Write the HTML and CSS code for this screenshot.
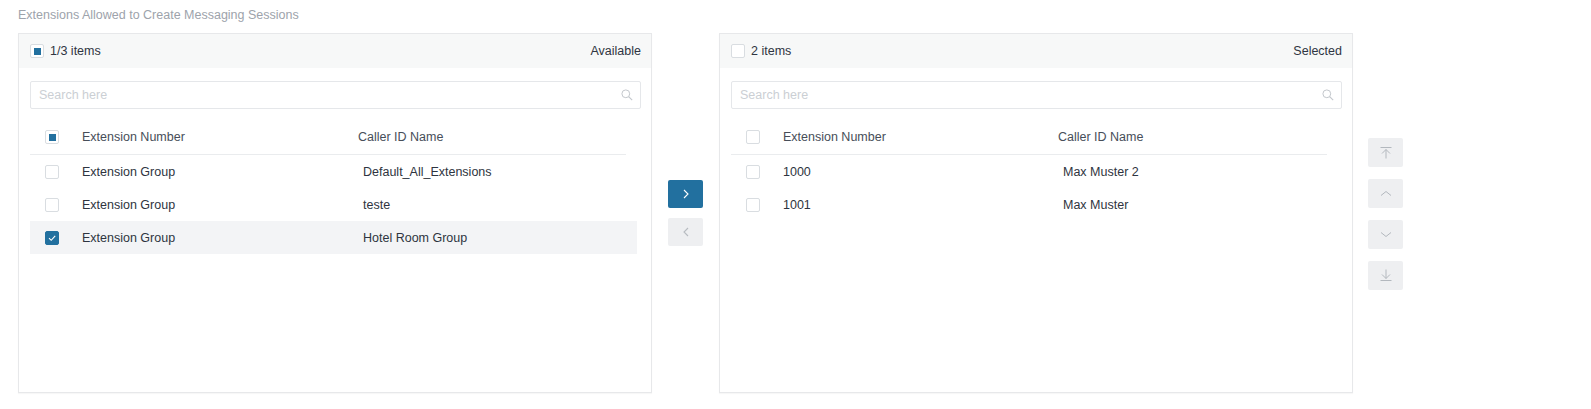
FILE: index.html
```html
<!DOCTYPE html>
<html lang="en">
<head>
  <meta charset="UTF-8">
  <title>Messaging Sessions</title>
  <meta name="viewport" content="width=device-width, initial-scale=1.0">
  <link rel="stylesheet" href="styles.css">
</head>
<body>
  <div class="page">
    <div class="field-label">Extensions Allowed to Create Messaging Sessions</div>

    <div class="transfer">
      <div class="transfer-list">
        <div class="list-header">
          <span class="cb cb-half"></span>
          <span class="count">1/3 items</span>
          <span class="list-title">Available</span>
        </div>
        <div class="list-body">
          <div class="search">
            <input type="text" placeholder="Search here">
            <svg width="12" height="12" viewBox="0 0 12 12"><circle cx="4.8" cy="4.8" r="3.9" fill="none" stroke="#c3c7cc" stroke-width="1"/><path d="M7.6 7.6 L11.2 11.2" stroke="#c3c7cc" stroke-width="1.1"/></svg>
          </div>
          <div class="table">
            <div class="row thead">
              <div class="cell-check"><span class="cb cb-half"></span></div>
              <div class="cell-num">Extension Number</div>
              <div class="cell-name">Caller ID Name</div>
            </div>
            <div class="row">
              <div class="cell-check"><span class="cb"></span></div>
              <div class="cell-num">Extension Group</div>
              <div class="cell-name">Default_All_Extensions</div>
            </div>
            <div class="row">
              <div class="cell-check"><span class="cb"></span></div>
              <div class="cell-num">Extension Group</div>
              <div class="cell-name">teste</div>
            </div>
            <div class="row selected">
              <div class="cell-check">
                <span class="cb cb-on"><svg width="10" height="10" viewBox="0 0 10 10"><path d="M2 5.2 L4.2 7.3 L8.2 2.8" fill="none" stroke="#fff" stroke-width="1.1"/></svg></span>
              </div>
              <div class="cell-num">Extension Group</div>
              <div class="cell-name">Hotel Room Group</div>
            </div>
          </div>
        </div>
      </div>

      <div class="operations">
        <button class="btn btn-primary">
          <svg width="8" height="10" viewBox="0 0 8 10"><path d="M2 1 L6 5 L2 9" fill="none" stroke="#fff" stroke-width="1.1"/></svg>
        </button>
        <button class="btn">
          <svg width="8" height="10" viewBox="0 0 8 10"><path d="M6 1 L2 5 L6 9" fill="none" stroke="#b7bbc1" stroke-width="1.1"/></svg>
        </button>
      </div>

      <div class="transfer-list list-right">
        <div class="list-header">
          <span class="cb"></span>
          <span class="count">2 items</span>
          <span class="list-title">Selected</span>
        </div>
        <div class="list-body">
          <div class="search">
            <input type="text" placeholder="Search here">
            <svg width="12" height="12" viewBox="0 0 12 12"><circle cx="4.8" cy="4.8" r="3.9" fill="none" stroke="#c3c7cc" stroke-width="1"/><path d="M7.6 7.6 L11.2 11.2" stroke="#c3c7cc" stroke-width="1.1"/></svg>
          </div>
          <div class="table">
            <div class="row thead">
              <div class="cell-check"><span class="cb"></span></div>
              <div class="cell-num">Extension Number</div>
              <div class="cell-name">Caller ID Name</div>
            </div>
            <div class="row">
              <div class="cell-check"><span class="cb"></span></div>
              <div class="cell-num">1000</div>
              <div class="cell-name">Max Muster 2</div>
            </div>
            <div class="row">
              <div class="cell-check"><span class="cb"></span></div>
              <div class="cell-num">1001</div>
              <div class="cell-name">Max Muster</div>
            </div>
          </div>
        </div>
      </div>

      <div class="sorting">
        <button class="btn btn-sort">
          <svg width="12" height="13" viewBox="0 0 12 13"><path d="M0.5 1.5 H11.5 M6 3.5 V12.5 M2 7.5 L6 3.5 L10 7.5" fill="none" stroke="#b3b8be" stroke-width="1"/></svg>
        </button>
        <button class="btn btn-sort">
          <svg width="12" height="7" viewBox="0 0 12 7"><path d="M1 5.5 L6 1.5 L11 5.5" fill="none" stroke="#b3b8be" stroke-width="1"/></svg>
        </button>
        <button class="btn btn-sort">
          <svg width="12" height="7" viewBox="0 0 12 7"><path d="M1 1.5 L6 5.5 L11 1.5" fill="none" stroke="#b3b8be" stroke-width="1"/></svg>
        </button>
        <button class="btn btn-sort">
          <svg width="12" height="13" viewBox="0 0 12 13"><path d="M6 0.5 V9.5 M2 5.5 L6 9.5 L10 5.5 M0.5 11.5 H11.5" fill="none" stroke="#b3b8be" stroke-width="1"/></svg>
        </button>
      </div>
    </div>
  </div>
</body>
</html>
```

FILE: styles.css
```css
body {
  margin: 0;
  font-family: "Liberation Sans", Arial, sans-serif;
  font-size: 12.5px;
  color: #2e3440;
  background: #fff;
}

.page {
  padding: 5px 18px;
}

.field-label {
  line-height: 20px;
  color: #9da3ab;
  margin-bottom: 8px;
}

.transfer {
  display: flex;
  align-items: flex-start;
}

.transfer-list {
  width: 634px;
  height: 360px;
  box-sizing: border-box;
  border: 1px solid #e7e8ea;
  box-shadow: 0 1px 1px rgba(0, 0, 0, 0.03);
  background: #fff;
}

.list-header {
  display: flex;
  align-items: center;
  height: 34px;
  padding: 0 10px 0 11px;
  background: #f7f8f8;
  color: #2f3542;
}

.count {
  margin-left: 6px;
}

.list-title {
  margin-left: auto;
}

.list-body {
  padding: 13px 10px 0 11px;
}

.search {
  display: flex;
  align-items: center;
  height: 28px;
  box-sizing: border-box;
  border: 1px solid #e5e7ea;
  border-radius: 2px;
  padding: 0 7px 0 8px;
}

.search input {
  flex: 1;
  border: none;
  outline: none;
  padding: 0;
  font-family: inherit;
  font-size: 12.5px;
  color: #303643;
  background: transparent;
}

.search input::placeholder {
  color: #cbcfd4;
}

.table {
  margin-top: 11px;
  margin-right: 4px;
}

.row {
  display: flex;
  align-items: center;
  height: 33px;
}

.thead {
  height: 34px;
  border-bottom: 1px solid #eaecee;
  margin-right: 11px;
  color: #474e59;
}

.row.selected {
  background: #f3f4f6;
}

.cell-check {
  width: 52px;
  padding-left: 15px;
  box-sizing: border-box;
  display: flex;
}

.cell-num {
  width: 276px;
}

.list-right .cell-num {
  width: 275px;
}

.cell-name {
  flex: 1;
  padding-left: 5px;
}

.thead .cell-name {
  padding-left: 0;
}

.cb {
  width: 14px;
  height: 14px;
  box-sizing: border-box;
  border: 1px solid #d9dde1;
  border-radius: 2px;
  background: #fff;
  display: flex;
  align-items: center;
  justify-content: center;
  flex-shrink: 0;
}

.cb-half::after {
  content: "";
  width: 7px;
  height: 7px;
  background: #22709f;
}

.cb-on {
  background: #22709f;
  border-color: #22709f;
}

.operations {
  width: 67px;
  box-sizing: border-box;
  padding-left: 16px;
  margin-top: 147px;
  display: flex;
  flex-direction: column;
  gap: 10px;
}

.btn {
  width: 35px;
  height: 28px;
  padding: 0;
  border: none;
  border-radius: 2px;
  background: #eeeff1;
  display: flex;
  align-items: center;
  justify-content: center;
}

.btn-primary {
  background: #22709f;
}

.sorting {
  margin-left: 15px;
  margin-top: 105px;
  display: flex;
  flex-direction: column;
  gap: 12px;
}

.btn-sort {
  height: 29px;
}
```
